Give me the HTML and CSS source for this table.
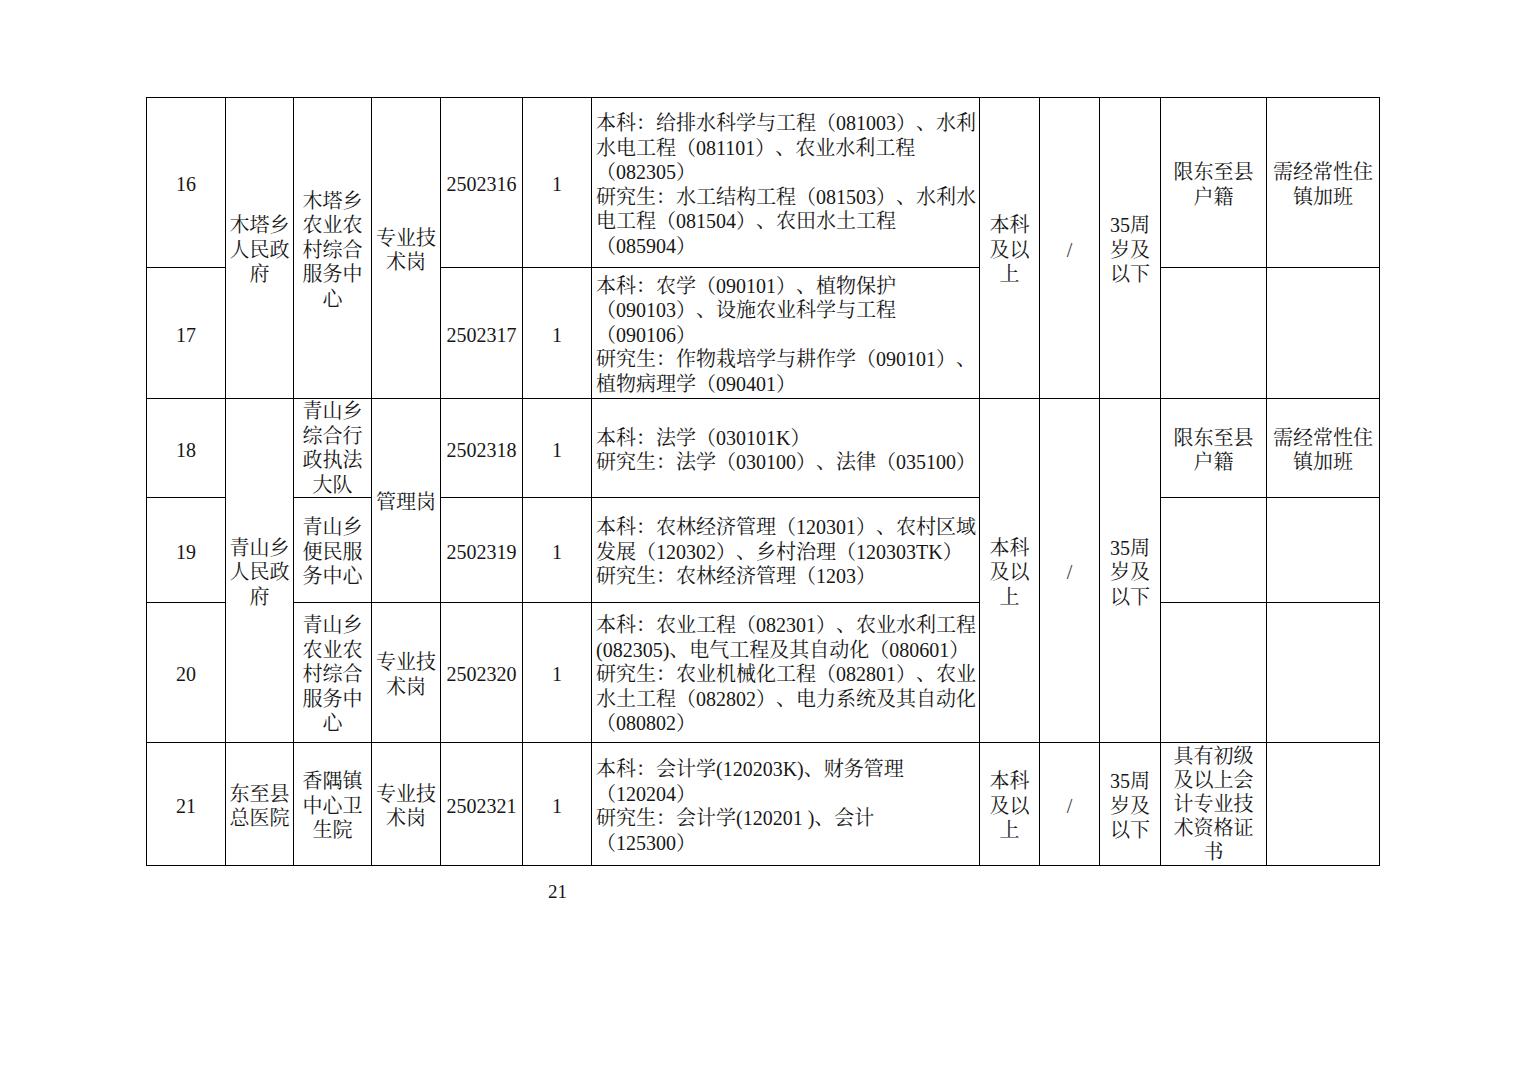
FILE: index.html
```html
<!DOCTYPE html>
<html lang="zh-CN">
<head>
<meta charset="utf-8">
<title>岗位表</title>
<link rel="stylesheet" href="styles.css">
</head>
<body>
<div class="page">
  <table class="jobs">
    <colgroup>
      <col class="c1"><col class="c2"><col class="c3"><col class="c4"><col class="c5"><col class="c6">
      <col class="c7"><col class="c8"><col class="c9"><col class="c10"><col class="c11"><col class="c12">
    </colgroup>
    <tbody>
      <tr class="r16">
        <td>16</td>
        <td rowspan="2">木塔乡<br>人民政<br>府</td>
        <td rowspan="2">木塔乡<br>农业农<br>村综合<br>服务中<br>心</td>
        <td rowspan="2">专业技<br>术岗</td>
        <td>2502316</td>
        <td>1</td>
        <td class="major">本科：给排水科学与工程（081003）、水利<br>水电工程（081101）、农业水利工程<br>（082305）<br>研究生：水工结构工程（081503）、水利水<br>电工程（081504）、农田水土工程<br>（085904）</td>
        <td rowspan="2">本科<br>及以<br>上</td>
        <td rowspan="2" class="slash">/</td>
        <td rowspan="2">35周<br>岁及<br>以下</td>
        <td>限东至县<br>户籍</td>
        <td>需经常性住<br>镇加班</td>
      </tr>
      <tr class="r17">
        <td>17</td>
        <td>2502317</td>
        <td>1</td>
        <td class="major">本科：农学（090101）、植物保护<br>（090103）、设施农业科学与工程<br>（090106）<br>研究生：作物栽培学与耕作学（090101）、<br>植物病理学（090401）</td>
        <td></td>
        <td></td>
      </tr>
      <tr class="r18">
        <td>18</td>
        <td rowspan="3">青山乡<br>人民政<br>府</td>
        <td class="tight">青山乡<br>综合行<br>政执法<br>大队</td>
        <td rowspan="2">管理岗</td>
        <td>2502318</td>
        <td>1</td>
        <td class="major">本科：法学（030101K）<br>研究生：法学（030100）、法律（035100）</td>
        <td rowspan="3">本科<br>及以<br>上</td>
        <td rowspan="3" class="slash">/</td>
        <td rowspan="3">35周<br>岁及<br>以下</td>
        <td>限东至县<br>户籍</td>
        <td>需经常性住<br>镇加班</td>
      </tr>
      <tr class="r19">
        <td>19</td>
        <td>青山乡<br>便民服<br>务中心</td>
        <td>2502319</td>
        <td>1</td>
        <td class="major">本科：农林经济管理（120301）、农村区域<br>发展（120302）、乡村治理（120303TK）<br>研究生：农林经济管理（1203）</td>
        <td></td>
        <td></td>
      </tr>
      <tr class="r20">
        <td>20</td>
        <td>青山乡<br>农业农<br>村综合<br>服务中<br>心</td>
        <td>专业技<br>术岗</td>
        <td>2502320</td>
        <td>1</td>
        <td class="major">本科：农业工程（082301）、农业水利工程<br>(082305)、电气工程及其自动化（080601）<br>研究生：农业机械化工程（082801）、农业<br>水土工程（082802）、电力系统及其自动化<br>（080802）</td>
        <td></td>
        <td></td>
      </tr>
      <tr class="r21">
        <td>21</td>
        <td>东至县<br>总医院</td>
        <td>香隅镇<br>中心卫<br>生院</td>
        <td>专业技<br>术岗</td>
        <td>2502321</td>
        <td>1</td>
        <td class="major">本科：会计学(120203K)、财务管理<br>（120204）<br>研究生：会计学(120201 )、会计<br>（125300）</td>
        <td>本科<br>及以<br>上</td>
        <td class="slash">/</td>
        <td>35周<br>岁及<br>以下</td>
        <td class="tight dense">具有初级<br>及以上会<br>计专业技<br>术资格证<br>书</td>
        <td></td>
      </tr>
    </tbody>
  </table>
  <div class="pageno">21</div>
</div>
</body>
</html>
```

FILE: styles.css
```css
html, body {
  margin: 0;
  padding: 0;
  background: #ffffff;
}

.page {
  padding: 97px 0 0 146px;
  font-family: "Liberation Serif", "Noto Serif CJK SC", "Noto Sans CJK SC", serif;
  font-size: 20px;
  line-height: 24.5px;
  color: #161616;
  text-spacing-trim: space-all;
}

.jobs {
  border-collapse: collapse;
  table-layout: fixed;
  width: 1233px;
}

.jobs td {
  border: 1.6px solid #000;
  padding: 4px 2px 0 2px;
  text-align: center;
  vertical-align: middle;
  white-space: nowrap;
  overflow: hidden;
}

.jobs td.tight {
  padding-top: 0;
}

.jobs td.dense {
  line-height: 24px;
}

.jobs td.major {
  text-align: left;
  padding-left: 4px;
}

.jobs td.slash {
  color: #333;
}

.c1 { width: 79px; }
.c2 { width: 68px; }
.c3 { width: 78px; }
.c4 { width: 69px; }
.c5 { width: 82px; }
.c6 { width: 69px; }
.c7 { width: 388px; }
.c8 { width: 60px; }
.c9 { width: 60px; }
.c10 { width: 61px; }
.c11 { width: 106px; }
.c12 { width: 113px; }

.r16 { height: 170px; }
.r17 { height: 131px; }
.r18 { height: 99px; }
.r19 { height: 105px; }
.r20 { height: 140px; }
.r21 { height: 123px; }

.pageno {
  margin: 14px 0 0 402px;
  font-size: 19px;
}
```
